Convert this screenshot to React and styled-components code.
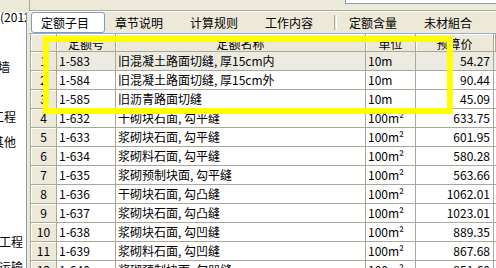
import React from "react"
import styled, { createGlobalStyle } from "styled-components"

const GlobalStyle = createGlobalStyle`
  body {
    margin: 0;
    background: #ece9d8;
    font-family: "Noto Sans CJK SC", "Liberation Sans", sans-serif;
    font-size: 12px;
    color: #000;
  }
`

const Screen = styled.div`
  display: flex;
  width: 496px;
  height: 268px;
  overflow: hidden;
  background: #ece9d8;
`

const Side = styled.div`
  display: flex;
  flex-direction: column;
  width: 29px;
  flex-shrink: 0;
  padding-top: 12px;
  box-sizing: border-box;
`

const Tree = styled.div`
  flex: 1;
  width: 27px;
  box-sizing: border-box;
  background: #fff;
  border-right: 1px solid #7f9db9;
  overflow: hidden;
`

const TreeList = styled.div`
  margin-top: -8px;
`

const TreeItem = styled.div`
  height: 25px;
  line-height: 25px;
  white-space: nowrap;
  margin-left: ${(p) => p.$shift || 0}px;
`

const Main = styled.div`
  flex: 1;
  min-width: 0;
  display: flex;
  flex-direction: column;
`

const TopStrip = styled.div`
  height: 10px;
  display: flex;
  justify-content: flex-end;
  align-items: flex-start;
  border-left: 1px solid #aca899;
  border-bottom: 1px solid #aca899;
  box-shadow: 0 1px 0 #fff;
`

const SearchBox = styled.div`
  width: 150px;
  height: 3px;
  background: #fff;
  border-left: 1px solid #7f9db9;
  border-bottom: 1px solid #7f9db9;
`

const TabBar = styled.div`
  display: flex;
  align-items: stretch;
  height: 21px;
  margin-top: 1px;
  border-bottom: 1px solid #98b0cf;
`

const Tab = styled.div`
  width: 75px;
  box-sizing: border-box;
  padding-left: 10px;
  line-height: 21px;
  white-space: nowrap;
  flex-shrink: 0;
`

const ActiveTab = styled(Tab)`
  width: 74px;
  height: 21px;
  margin-left: 2px;
  padding-left: 9px;
  line-height: 19px;
  background: #fff;
  border: 1px solid #7f9db9;
  border-radius: 3px;
`

const TabDivider = styled.div`
  width: 1px;
  margin: 3px 2px 3px 4px;
  border-left: 1px solid #aca899;
  border-right: 1px solid #fff;
`

const Grid = styled.div`
  position: relative;
  flex: 1;
  margin-left: 1px;
  background: #fff;
  border-left: 1px solid #aca899;
  overflow: hidden;
`

const Row = styled.div`
  display: grid;
  grid-template-columns: 26px 59px 250px 50px 78px 1fr;
  height: ${(p) => (p.$head ? 18 : 19)}px;
  background: ${(p) => (p.$current ? "#ecebe2" : "#fff")};
`

const Cell = styled.div`
  box-sizing: border-box;
  padding: 0 ${(p) => (p.$right ? 3 : 2)}px 0 2px;
  border-right: 1px solid #aca899;
  border-bottom: 1px solid #aca899;
  line-height: 18px;
  white-space: nowrap;
  overflow: hidden;
  text-align: ${(p) => (p.$right ? "right" : "left")};
`

const HeadCell = styled(Cell)`
  background: #ece9d8;
  box-shadow: inset 1px 1px 0 #fff;
  text-align: center;
  line-height: 19px;
  padding: 0;
`

const RowNum = styled(HeadCell)`
  line-height: 18px;
`

const Marker = styled.div`
  position: absolute;
  left: 12px;
  top: 2px;
  width: 410px;
  height: 78px;
  box-sizing: border-box;
  border: 6px solid #ffff00;
  pointer-events: none;
`

const treeItems = [
  { text: "定额(2012)", shift: -24 },
  { text: "", shift: 0 },
  { text: "砌筑墙", shift: -26 },
  { text: "", shift: 0 },
  { text: "道路工程", shift: -32 },
  { text: "零星其他", shift: -32 },
  { text: "", shift: 0 },
  { text: "", shift: 0 },
  { text: "", shift: 0 },
  { text: "附属工程", shift: -25 },
  { text: "土方运输", shift: -25 },
]

const tabs = ["章节说明", "计算规则", "工作内容"]

const rows = [
  ["1-583", "旧混凝土路面切缝, 厚15cm内", "10m", "54.27"],
  ["1-584", "旧混凝土路面切缝, 厚15cm外", "10m", "90.44"],
  ["1-585", "旧沥青路面切缝", "10m", "45.09"],
  ["1-632", "干砌块石面, 勾平缝", "100m²", "633.75"],
  ["1-633", "浆砌块石面, 勾平缝", "100m²", "601.95"],
  ["1-634", "浆砌料石面, 勾平缝", "100m²", "580.28"],
  ["1-635", "浆砌预制块面, 勾平缝", "100m²", "563.66"],
  ["1-636", "干砌块石面, 勾凸缝", "100m²", "1062.01"],
  ["1-637", "浆砌块石面, 勾凸缝", "100m²", "1023.01"],
  ["1-638", "浆砌块石面, 勾凹缝", "100m²", "889.35"],
  ["1-639", "浆砌料石面, 勾凹缝", "100m²", "867.68"],
  ["1-640", "浆砌预制块面, 勾凹缝", "100m²", "851.60"],
]

export default function App() {
  return (
    <>
      <GlobalStyle />
      <Screen>
        <Side>
          <Tree>
            <TreeList>
              {treeItems.map((item, i) => (
                <TreeItem key={i} $shift={item.shift}>
                  {item.text}
                </TreeItem>
              ))}
            </TreeList>
          </Tree>
        </Side>

        <Main>
          <TopStrip>
            <SearchBox />
          </TopStrip>

          <TabBar>
            <ActiveTab>定额子目</ActiveTab>
            {tabs.map((t) => (
              <Tab key={t}>{t}</Tab>
            ))}
            <TabDivider />
            <Tab>定额含量</Tab>
            <Tab>未材組合</Tab>
          </TabBar>

          <Grid>
            <Row $head>
              <HeadCell />
              <HeadCell>定额号</HeadCell>
              <HeadCell>定额名称</HeadCell>
              <HeadCell>单位</HeadCell>
              <HeadCell>预算价</HeadCell>
              <HeadCell />
            </Row>
            {rows.map((r, i) => (
              <Row key={r[0]} $current={i === 0}>
                <RowNum>{i + 1}</RowNum>
                <Cell>{r[0]}</Cell>
                <Cell>{r[1]}</Cell>
                <Cell>{r[2]}</Cell>
                <Cell $right>{r[3]}</Cell>
                <Cell />
              </Row>
            ))}
            <Marker />
          </Grid>
        </Main>
      </Screen>
    </>
  )
}
